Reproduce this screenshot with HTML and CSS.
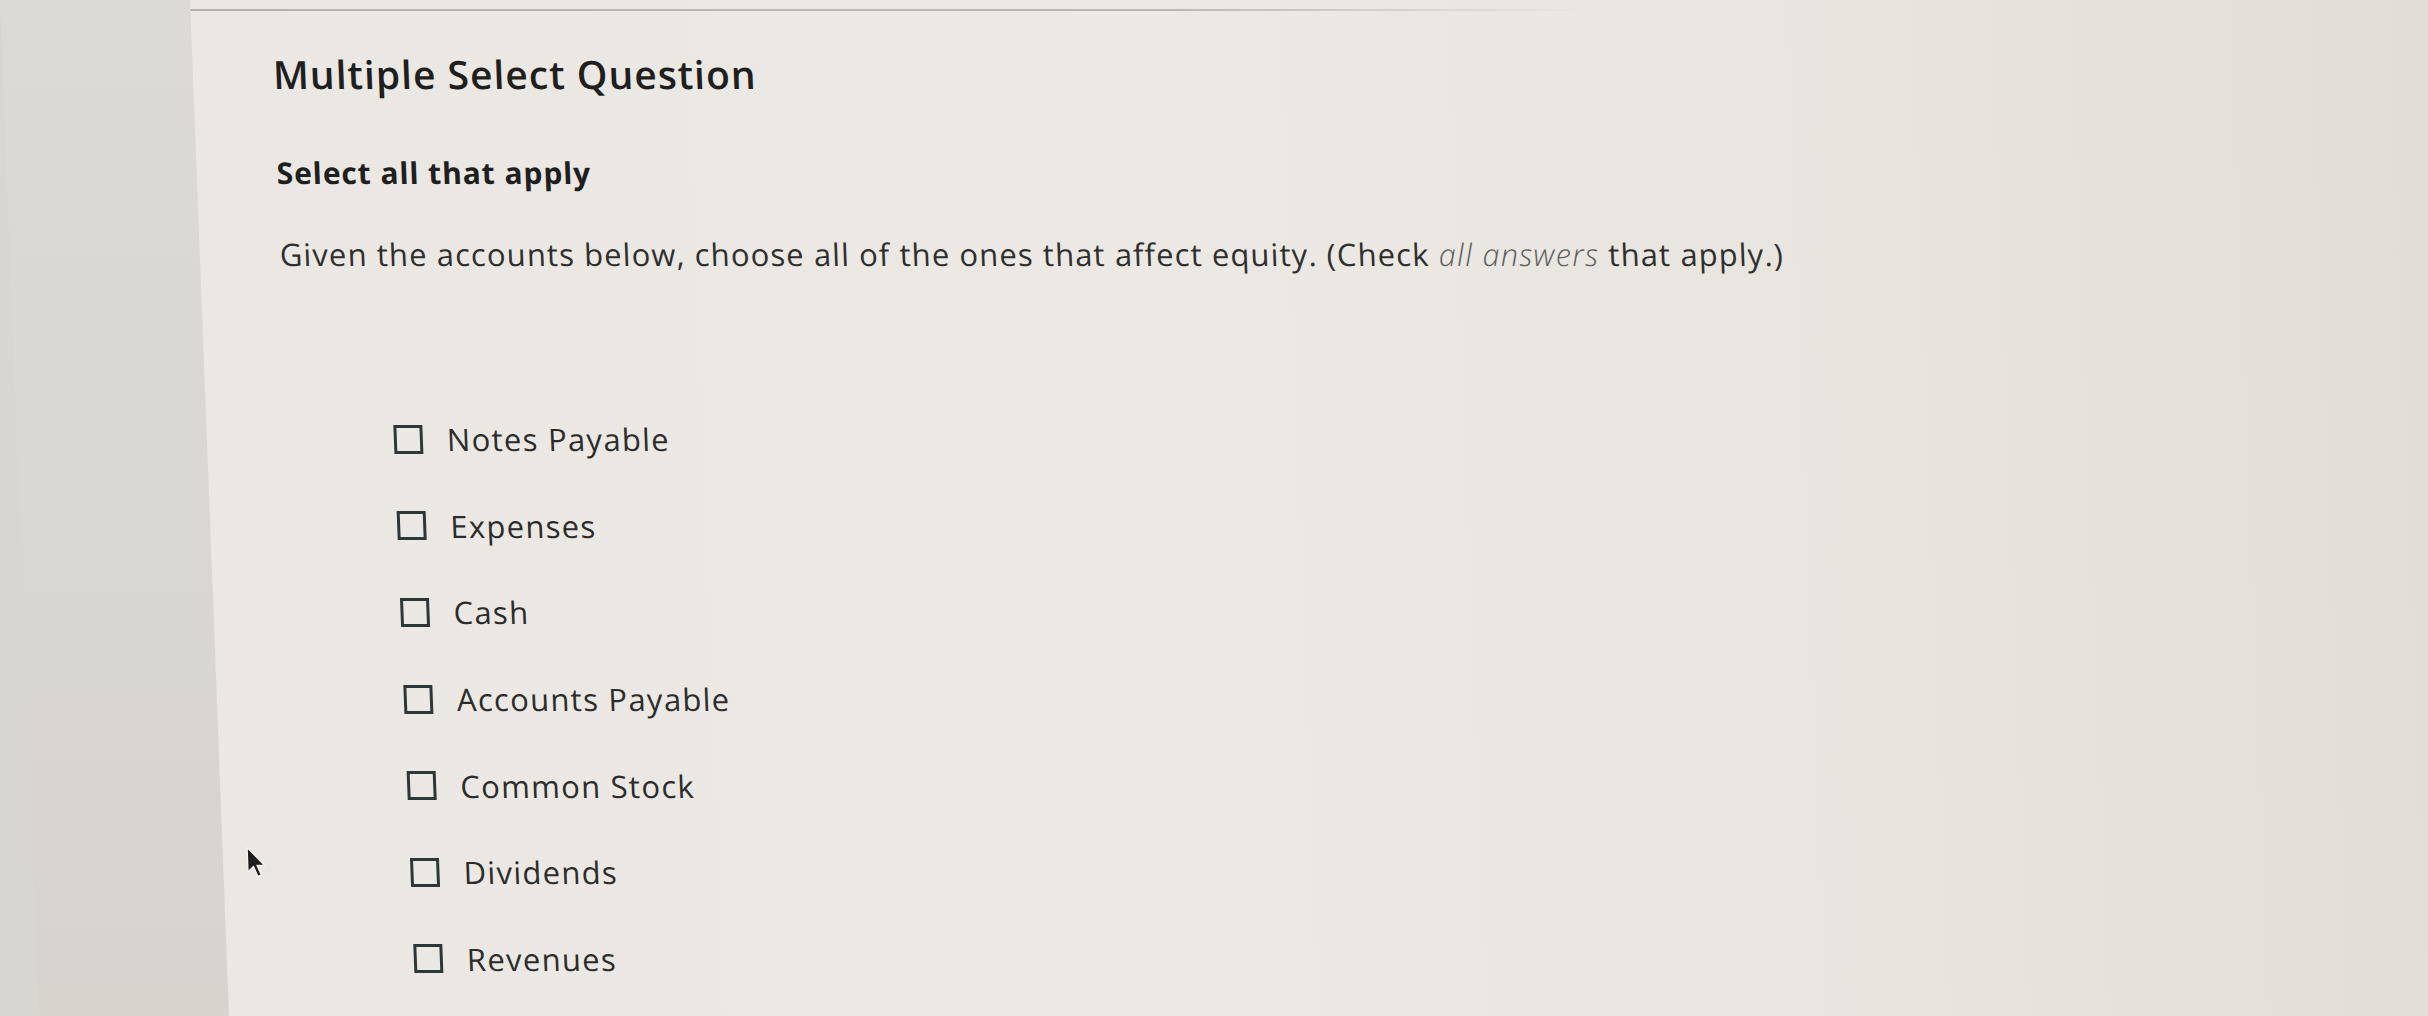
FILE: index.html
```html
<!DOCTYPE html>
<html lang="en">
<head>
<meta charset="utf-8">
<title>Multiple Select Question</title>
<link rel="stylesheet" href="styles.css">
</head>
<body>
<div class="page">
  <aside class="sidebar"></aside>
  <main class="main">
    <div class="topline"></div>
    <h1 class="title">Multiple Select Question</h1>
    <h2 class="subtitle">Select all that apply</h2>
    <p class="prompt">Given the accounts below, choose all of the ones that affect equity. (Check <em class="hint">all answers</em> that apply.)</p>
    <ul class="choices">
      <li class="choice"><span class="box"></span><span class="label">Notes Payable</span></li>
      <li class="choice"><span class="box"></span><span class="label">Expenses</span></li>
      <li class="choice"><span class="box"></span><span class="label">Cash</span></li>
      <li class="choice"><span class="box"></span><span class="label">Accounts Payable</span></li>
      <li class="choice"><span class="box"></span><span class="label">Common Stock</span></li>
      <li class="choice"><span class="box"></span><span class="label">Dividends</span></li>
      <li class="choice"><span class="box"></span><span class="label">Revenues</span></li>
    </ul>
  </main>
  <svg class="cursor" width="20" height="34" viewBox="0 0 20 34" aria-hidden="true">
    <path d="M1.5 1.5 L1.5 26 L7.2 20.5 L11.2 30.5 L14.8 29 L10.8 19.5 L18.5 19.5 Z" fill="#1d1d1d" stroke="#f4f2ee" stroke-width="1.4" stroke-linejoin="round"/>
  </svg>
</div>
</body>
</html>
```
FILE: styles.css
```css
html, body {
  margin: 0;
  padding: 0;
  height: 100%;
  overflow: hidden;
  background: #d8d6d1;
}

.page {
  position: relative;
  display: flex;
  width: 100%;
  height: 1016px;
  transform: skewX(2.2deg);
  transform-origin: 0 0;
  font-family: "Open Sans", "Lato", sans-serif;
}

.sidebar {
  flex: 0 0 190px;
  background: linear-gradient(180deg, #dcdad5 0%, #d7d4ce 100%);
}

.main {
  flex: 1 1 auto;
  display: flex;
  flex-direction: column;
  padding: 9px 0 0 80px;
  background: linear-gradient(90deg, #ebe8e3 0%, #ece9e4 45%, #e8e5df 75%, #e1ded7 100%);
}

.topline {
  height: 2px;
  margin-left: -80px;
  width: 1400px;
  background: linear-gradient(90deg, #b3b1ad 0%, #bab8b4 70%, rgba(200, 198, 194, 0) 100%);
}

.title {
  margin: 38px 0 0;
  height: 50px;
  line-height: 50px;
  font-size: 39px;
  font-weight: 600;
  color: #1f1f1f;
  letter-spacing: 1px;
}

.subtitle {
  margin: 54px 0 0;
  height: 40px;
  line-height: 40px;
  font-size: 30px;
  font-weight: 700;
  color: #1f1f1f;
  letter-spacing: 0.9px;
}

.prompt {
  margin: 41px 0 0;
  height: 40px;
  line-height: 40px;
  font-size: 31px;
  font-weight: 400;
  color: #2f2f2f;
  letter-spacing: 1.1px;
}

.hint {
  font-style: italic;
  font-weight: 300;
  color: #5e5e5e;
}

.choices {
  list-style: none;
  margin: 122px 0 0 107px;
  padding: 0;
  display: flex;
  flex-direction: column;
}

.choice {
  height: 86.6px;
  display: flex;
  align-items: center;
  gap: 24px;
}

.box {
  box-sizing: border-box;
  width: 29px;
  height: 29px;
  border: 3.5px solid #2c3837;
  flex: 0 0 auto;
}

.label {
  font-size: 31px;
  color: #2c2c2c;
  line-height: 40px;
  letter-spacing: 1.3px;
}

.cursor {
  position: absolute;
  left: 213px;
  top: 846px;
}
```
